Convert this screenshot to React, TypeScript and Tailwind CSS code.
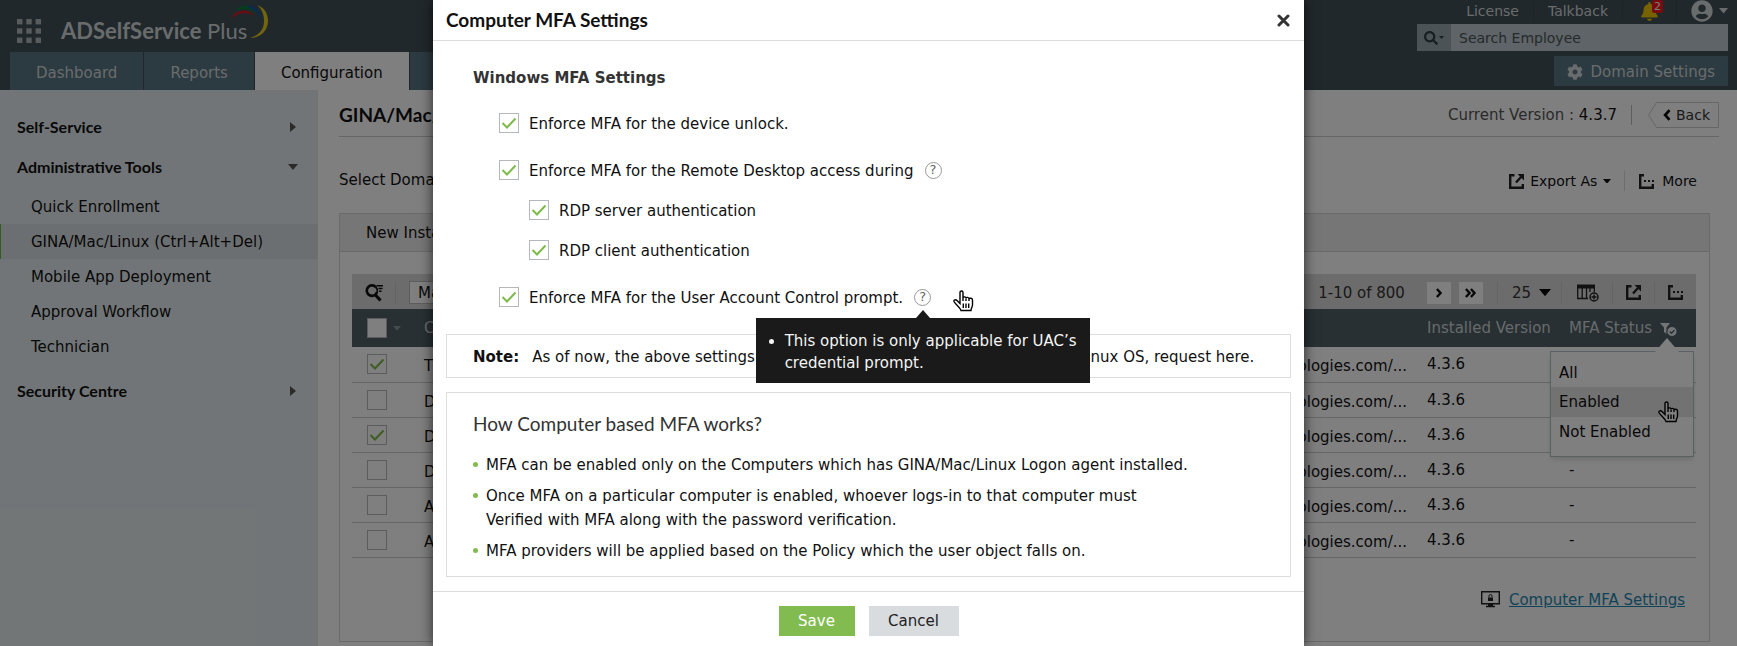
import type { ReactNode } from 'react'
import { FaCog, FaSearch, FaUserCircle } from 'react-icons/fa'
import { FaBell } from 'react-icons/fa6'
import { clsx } from 'clsx'

interface NavItem {
  label: string
  active?: boolean
}

interface ComputerRow {
  name: string
  selected: boolean
  domain: string
  version: string
  status?: string
}

const TABS: NavItem[] = [
  { label: 'Dashboard' },
  { label: 'Reports' },
  { label: 'Configuration', active: true },
  { label: 'Admin' },
]

const ADMIN_TOOLS: NavItem[] = [
  { label: 'Quick Enrollment' },
  { label: 'GINA/Mac/Linux (Ctrl+Alt+Del)', active: true },
  { label: 'Mobile App Deployment' },
  { label: 'Approval Workflow' },
  { label: 'Technician' },
]

const DOMAIN = 'technologies.com/...'

const ROWS: ComputerRow[] = [
  { name: 'TEST-1', selected: true, domain: DOMAIN, version: '4.3.6' },
  { name: 'DESKTOP-1', selected: false, domain: DOMAIN, version: '4.3.6' },
  { name: 'DESKTOP-2', selected: true, domain: DOMAIN, version: '4.3.6' },
  { name: 'DESKTOP-3', selected: false, domain: DOMAIN, version: '4.3.6', status: '-' },
  { name: 'ADMIN-1', selected: false, domain: DOMAIN, version: '4.3.6', status: '-' },
  { name: 'ADMIN-2', selected: false, domain: DOMAIN, version: '4.3.6', status: '-' },
]

export default function App() {
  return (
    <div className="relative min-h-screen overflow-hidden bg-white font-['DejaVu_Sans',Verdana,sans-serif] text-[15px] leading-5 text-[#111]">
      <TopBar />
      <div className="flex min-h-[556px]">
        <Sidebar />
        <MainContent />
      </div>
      <div className="absolute inset-0 flex justify-center bg-black/50">
        <MfaDialog />
      </div>
    </div>
  )
}

// =============================================================================
// Header
// =============================================================================

function TopBar() {
  return (
    <header className="flex h-[90px] justify-between bg-[#425056] text-[#d3d8da]">
      <div className="flex flex-col justify-between">
        <div className="flex h-[52px] items-end gap-5 pl-[17px]">
          <button type="button" aria-label="Apps" className="mb-[9px]">
            <AppsIcon />
          </button>
          <div className="relative pb-2 font-[Lato,sans-serif] text-[22px] leading-[26px]">
            <strong>ADSelfService</strong> Plus
            <Swoosh />
          </div>
        </div>
        <nav className="flex h-[38px] gap-px pl-[10px]">
          {TABS.map((tab) => (
            <a
              key={tab.label}
              href="#"
              className={clsx(
                'flex items-center px-[26px] pt-1',
                tab.active ? 'bg-white text-[#111]' : 'bg-[#587582]'
              )}
            >
              {tab.label}
            </a>
          ))}
        </nav>
      </div>

      <div className="flex flex-col items-end pr-[9px]">
        <div className="flex h-6 items-center pb-0.5 text-sm">
          <a href="#" className="border-r border-[#3a474d] px-[14px]">License</a>
          <a href="#" className="border-r border-[#3a474d] px-[14px]">Talkback</a>
          <button type="button" aria-label="Notifications" className="relative mx-[17px]">
            <FaBell className="text-[19px] text-[#f0c400]" />
            <span className="absolute -top-0.5 -right-1 rounded-xs bg-[#f01818] px-[2px] text-[11px] leading-[13px] text-white">
              2
            </span>
          </button>
          <button type="button" aria-label="Account" className="flex items-center gap-[6px] border-l border-[#3a474d] pl-[14px]">
            <FaUserCircle className="text-[22px]" />
            <Caret className="w-[9px]" />
          </button>
        </div>
        <div className="flex h-[27px] w-[311px] bg-[#bcc8ce]">
          <button type="button" aria-label="Search type" className="flex w-[34px] items-center justify-center gap-px bg-[#98a6ad] text-[#333d42]">
            <FaSearch className="text-sm" />
            <Caret className="w-[5px]" />
          </button>
          <input
            aria-label="Search Employee"
            placeholder="Search Employee"
            className="min-w-0 grow bg-transparent px-2 text-sm placeholder:text-[#4d5558]"
          />
        </div>
        <button type="button" className="mt-[5px] flex h-[30px] items-center gap-2 bg-[#587582] px-[13px] pt-0.5">
          <FaCog className="text-base" />
          Domain Settings
        </button>
      </div>
    </header>
  )
}

// =============================================================================
// Sidebar
// =============================================================================

function Sidebar() {
  return (
    <aside className="w-[318px] shrink-0 bg-[#e3ebee] pt-[27px]">
      <SidebarHeading label="Self-Service" />
      <div className="mt-5">
        <SidebarHeading label="Administrative Tools" open />
      </div>
      <ul className="mt-3">
        {ADMIN_TOOLS.map((item) => (
          <li key={item.label}>
            <a
              href="#"
              className={clsx(
                'flex h-[35px] items-center border-l pl-[30px]',
                item.active ? 'border-[#6dbb3d] bg-[#d9dfe2]' : 'border-transparent'
              )}
            >
              {item.label}
            </a>
          </li>
        ))}
      </ul>
      <div className="mt-[17px]">
        <SidebarHeading label="Security Centre" />
      </div>
    </aside>
  )
}

function SidebarHeading({ label, open = false }: { label: string; open?: boolean }) {
  return (
    <button
      type="button"
      className="flex h-5 w-full items-center justify-between pr-5 pl-[17px] font-[Lato,sans-serif] text-base font-bold"
    >
      {label}
      <Caret className={clsx('w-[10px] text-[#555]', !open && '-rotate-90')} />
    </button>
  )
}

// =============================================================================
// Main content
// =============================================================================

function MainContent() {
  return (
    <main className="min-w-0 grow pr-[18px] pl-[21px]">
      <div className="flex h-[47px] items-center justify-between border-b border-[#ccc] pt-[3px]">
        <h1 className="font-[Lato,sans-serif] text-[19px] font-bold">GINA/Mac/Linux (Ctrl+Alt+Del)</h1>
        <div className="flex items-center">
          <span className="text-[#555]">
            Current Version : <span className="text-[#111]">4.3.7</span>
          </span>
          <span className="mr-4 ml-[14px] h-5 w-px bg-[#bbb]" />
          <BackButton />
        </div>
      </div>

      <div className="mt-8 flex items-center justify-between pr-[22px]">
        <label className="flex items-center gap-2">
          Select Domain
          <select className="w-48 border border-[#ccc] bg-white text-sm">
            <option>All Domains</option>
          </select>
        </label>
        <div className="flex items-center pt-0.5 text-sm">
          <button type="button" className="flex items-center gap-[6px] border-r border-[#ddd] pr-[13px]">
            <ExportIcon />
            Export As
            <Caret className="w-2" />
          </button>
          <button type="button" className="flex items-center gap-2 pl-[14px]">
            <MoreIcon />
            More
          </button>
        </div>
      </div>

      <section className="mt-[22px] mr-[9px] h-[429px] border border-[#d4d4d4]">
        <div className="flex h-[38px] items-center border-b border-[#d4d4d4] bg-[#ececec] px-[26px]">
          New Installation
        </div>
        <div className="mt-[22px] mr-[13px] ml-3">
          <TableToolbar />
          <ComputerTable />
          <a href="#" className="mt-8 mr-[11px] flex items-center justify-end gap-[9px] text-[#1f87b0]">
            <MonitorLockIcon />
            <span className="underline">Computer MFA Settings</span>
          </a>
        </div>
      </section>
    </main>
  )
}

function BackButton() {
  return (
    <button type="button" className="relative flex h-[26px] w-[71px] items-center justify-end gap-[5px] pr-[9px] text-sm">
      <svg viewBox="0 0 71 26" className="absolute inset-0 h-full w-full" fill="none" stroke="#ccc">
        <path d="M8.5.5h62v25h-62L.5 13z" />
      </svg>
      <Chevron className="h-3 rotate-180" />
      <span className="text-[#333]">Back</span>
    </button>
  )
}

function TableToolbar() {
  return (
    <div className="flex h-[35px] items-center justify-between bg-[#d9d9d9] px-[13px] pt-0.5">
      <div className="flex items-center">
        <button type="button" aria-label="Filter rows">
          <SearchListIcon />
        </button>
        <Divider className="mr-[13px] ml-3" />
        <select aria-label="Move to" className="h-[23px] w-40 border border-[#bbb] bg-white px-1">
          <option>Manage</option>
        </select>
      </div>
      <div className="flex items-center">
        <span className="text-[#333]">1-10 of 800</span>
        <button type="button" aria-label="Next page" className="ml-[22px] flex h-[22px] w-6 items-center justify-center bg-white">
          <Chevron className="h-[10px]" />
        </button>
        <button type="button" aria-label="Last page" className="ml-2 flex h-[22px] w-6 items-center justify-center bg-white">
          <Chevron className="h-[10px]" />
          <Chevron className="-ml-px h-[10px]" />
        </button>
        <Divider className="mx-[14px]" />
        <button type="button" className="flex items-center gap-2 text-[#333]">
          25
          <Caret className="w-3 text-black" />
        </button>
        <Divider className="mr-[15px] ml-[10px]" />
        <button type="button" aria-label="Add column">
          <ColumnsPlusIcon />
        </button>
        <Divider className="mx-[13px]" />
        <button type="button" aria-label="Export">
          <ExportIcon />
        </button>
        <Divider className="mx-[13px]" />
        <button type="button" aria-label="More">
          <MoreIcon />
        </button>
      </div>
    </div>
  )
}

function ComputerTable() {
  return (
    <table className="w-full table-fixed text-left">
      <thead className="bg-[#506066] text-[#cfd5d8]">
        <tr className="h-[38px]">
          <th className="w-[72px] pl-[15px] font-normal">
            <span className="flex items-center gap-[6px]">
              <CheckBox label="Select all" />
              <Caret className="w-2 text-[#8b989e]" />
            </span>
          </th>
          <th className="font-normal">Computer Name</th>
          <th className="font-normal">Domain</th>
          <th className="w-[142px] font-normal">Installed Version</th>
          <th className="w-[127px] font-normal">
            <span className="relative flex items-center gap-2">
              MFA Status
              <FilterCheckIcon />
              <StatusMenu />
            </span>
          </th>
        </tr>
      </thead>
      <tbody>
        {ROWS.map((row) => (
          <tr key={row.name} className="h-[35px] border-b border-[#ccc]">
            <td className="pl-[15px]">
              <CheckBox label={`Select ${row.name}`} checked={row.selected} />
            </td>
            <td className="pt-1">{row.name}</td>
            <td className="pt-1 pr-5 text-right">{row.domain}</td>
            <td>{row.version}</td>
            <td>{row.status}</td>
          </tr>
        ))}
      </tbody>
    </table>
  )
}

function StatusMenu() {
  return (
    <div className="absolute top-[33px] -left-[19px] h-[106px] w-36 border border-[#b5c2c4] bg-white pt-[7px] text-[#111] shadow-md">
      <svg viewBox="0 0 24 14" className="absolute -top-[14px] right-[14px] w-6" fill="white">
        <path d="M0 14 12 0l12 14z" />
      </svg>
      <button type="button" className="block h-7 w-full px-2 text-left">All</button>
      <button type="button" className="relative block h-[30px] w-full bg-[#e4e4e4] px-2 text-left">
        Enabled
        <HandCursor className="absolute top-[14px] right-[14px]" />
      </button>
      <button type="button" className="block h-[30px] w-full px-2 text-left">Not Enabled</button>
    </div>
  )
}

// =============================================================================
// Dialog
// =============================================================================

function MfaDialog() {
  return (
    <div
      role="dialog"
      aria-labelledby="mfa-title"
      className="w-[871px] max-w-full bg-white shadow-[0_0_12px_rgba(0,0,0,0.7)]"
    >
      <div className="flex h-[41px] items-center justify-between border-b border-[#ddd] pr-[14px] pl-[13px]">
        <h2 id="mfa-title" className="font-[Lato,sans-serif] text-[19px] font-bold">
          Computer MFA Settings
        </h2>
        <button type="button" aria-label="Close">
          <CloseIcon />
        </button>
      </div>

      <div className="px-[13px] pt-[27px] pb-[14px]">
        <h3 className="pl-[27px] text-[15px] font-bold text-[#333]">Windows MFA Settings</h3>
        <div className="mt-[25px] flex flex-col gap-[27px] pl-[53px]">
          <Option label="Enforce MFA for the device unlock." />
          <div className="flex flex-col gap-5">
            <Option label="Enforce MFA for the Remote Desktop access during">
              <HelpIcon />
            </Option>
            <div className="flex flex-col gap-5 pl-[30px]">
              <Option label="RDP server authentication" />
              <Option label="RDP client authentication" />
            </div>
          </div>
          <Option label="Enforce MFA for the User Account Control prompt.">
            <HelpIcon>
              <Tooltip />
            </HelpIcon>
            <HandCursor className="ml-[22px] translate-y-1" />
          </Option>
        </div>

        <p className="mt-[27px] flex h-11 items-center gap-[13px] border border-[#ddd] pt-0.5 pl-[26px] whitespace-nowrap">
          <strong>Note:</strong>
          As of now, the above settings are not applicable for the Mac OS and the Linux OS, request here.
        </p>

        <div className="mt-[14px] border border-[#ddd] px-[26px] pt-[19px] pb-[13px]">
          <h3 className="font-[Lato,sans-serif] text-[19px] leading-6 text-[#333]">How Computer based MFA works?</h3>
          <ul className="mt-[17px] flex flex-col gap-[7px] leading-6">
            <Bullet>MFA can be enabled only on the Computers which has GINA/Mac/Linux Logon agent installed.</Bullet>
            <Bullet>
              Once MFA on a particular computer is enabled, whoever logs-in to that computer must
              <br />
              Verified with MFA along with the password verification.
            </Bullet>
            <Bullet>MFA providers will be applied based on the Policy which the user object falls on.</Bullet>
          </ul>
        </div>
      </div>

      <div className="flex justify-center gap-[14px] border-t border-[#ddd] pt-[14px] pb-3">
        <button type="button" className="h-[30px] w-[76px] bg-[#82bc50] text-white">Save</button>
        <button type="button" className="h-[30px] w-[90px] bg-[#d8dcde] text-[#222]">Cancel</button>
      </div>
    </div>
  )
}

function Option({ label, children }: { label: string; children?: ReactNode }) {
  return (
    <div className="flex h-5 items-center">
      <label className="flex items-center gap-[10px]">
        <CheckBox checked />
        <span className="pt-0.5">{label}</span>
      </label>
      {children}
    </div>
  )
}

function Bullet({ children }: { children: ReactNode }) {
  return (
    <li className="flex gap-2">
      <span className="mt-[9px] h-[5px] w-[5px] shrink-0 rounded-full bg-[#82bc50]" />
      <span>{children}</span>
    </li>
  )
}

function Tooltip() {
  return (
    <div role="tooltip" className="absolute top-7 left-1/2 z-10 w-[334px] -translate-x-1/2 bg-[#1a1a1a] pt-3 pb-[9px] pl-[29px] text-[15px] leading-[22px] text-[#f4f4f4]">
      <svg viewBox="0 0 14 8" className="absolute -top-2 left-1/2 w-[14px] -translate-x-1/2" fill="#1a1a1a">
        <path d="M0 8 7 0l7 8z" />
      </svg>
      <ul className="list-disc">
        <li className="whitespace-nowrap">
          This option is only applicable for UAC’s
          <br />
          credential prompt.
        </li>
      </ul>
    </div>
  )
}

interface CheckBoxProps {
  checked?: boolean
  label?: string
}

function CheckBox({ checked = false, label }: CheckBoxProps) {
  return (
    <span className="relative block h-5 w-5 shrink-0">
      <input
        type="checkbox"
        aria-label={label}
        defaultChecked={checked}
        className="peer block h-5 w-5 appearance-none border border-[#b4b8ba] bg-white"
      />
      <svg
        viewBox="0 0 20 20"
        className="pointer-events-none absolute inset-0 hidden peer-checked:block"
        fill="none"
        stroke="#7dba4b"
        strokeWidth="2"
      >
        <path d="M3.5 10 8 14.500 16.500 5.500" />
      </svg>
    </span>
  )
}

// =============================================================================
// Icons
// =============================================================================

function Divider({ className }: { className?: string }) {
  return <span className={clsx('h-[22px] w-px bg-[#c9c9c9]', className)} />
}

function Caret({ className }: { className?: string }) {
  return (
    <svg viewBox="0 0 10 6" className={className} fill="currentColor">
      <path d="M0 0h10L5 6z" />
    </svg>
  )
}

function Chevron({ className }: { className?: string }) {
  return (
    <svg viewBox="0 0 7 11" className={className} fill="none" stroke="#111" strokeWidth="2.600">
      <path d="m1 1 4 4.500L1 10" />
    </svg>
  )
}

function CloseIcon() {
  return (
    <svg width="13" height="13" viewBox="0 0 13 13" fill="none" stroke="#333" strokeWidth="3" strokeLinecap="round">
      <path d="m2 2 9 9M11 2l-9 9" />
    </svg>
  )
}

function HelpIcon({ children }: { children?: ReactNode }) {
  return (
    <span className="relative ml-[11px] flex h-[17px] w-[17px] items-center justify-center rounded-full border border-[#999] text-[13px] text-[#666]">
      ?
      {children}
    </span>
  )
}

function AppsIcon() {
  return (
    <svg width="24" height="24" viewBox="0 0 24 24" fill="#b3b8ba">
      {[0, 9.3, 18.6].map((y) =>
        [0, 9.3, 18.6].map((x) => <rect key={`${x}-${y}`} x={x} y={y} width="5.400" height="5.400" />)
      )}
    </svg>
  )
}

function Swoosh() {
  return (
    <svg viewBox="0 0 40 35" className="absolute -top-[14px] -right-[22px] w-10">
      <path d="M8 5c4-4 12-5 18-1l2 6C21 5 14 4 8 7z" fill="#0d7a3c" />
      <path d="M19 1c8 0 13 7 14 15-3-6-8-10-14-12z" fill="#1c5494" />
      <path d="M2 16C4 7 17 2 26 12 18 8 8 8 2 16z" fill="#cc1f26" />
      <path d="M28 1c8 3 11 9 11 16 0 10-8 17-18 17 9-3 14-8 14-17 0-7-2-12-7-16z" fill="#e6cb1c" />
    </svg>
  )
}

function ExportIcon() {
  return (
    <svg width="15" height="15" viewBox="0 0 15 15" fill="none" stroke="#222" strokeWidth="2.400">
      <path d="M5.500 1.200H1.200v12.600h12.600V10" />
      <path d="M7 8.500 12 3" />
      <path d="M8.500 0H15v6.500z" fill="#222" stroke="none" />
    </svg>
  )
}

function MoreIcon() {
  return (
    <svg width="15" height="15" viewBox="0 0 15 15" fill="none" stroke="#222" strokeWidth="2.400">
      <path d="M5 1.200H1.200v12.600h12.600V10" />
      <path d="M5 7h10" strokeWidth="2" strokeDasharray="2 2" />
    </svg>
  )
}

function SearchListIcon() {
  return (
    <svg width="18" height="18" viewBox="0 0 18 18" fill="none" stroke="#111">
      <path d="M11 3.300A5.200 5.200 0 1 0 12 8" strokeWidth="2.600" />
      <path d="M11 3.300A5.200 5.200 0 0 1 10.500 10.500" strokeWidth="1.800" />
      <path d="m10.500 11 5 5.500" strokeWidth="3.200" />
      <path d="M11.500 1.700H18M13.500 4.500h4M14 7.200h2.500" strokeWidth="1.400" />
    </svg>
  )
}

function ColumnsPlusIcon() {
  return (
    <svg width="22" height="18" viewBox="0 0 22 18" fill="none" stroke="#222">
      <path d="M0 2.500h18" strokeWidth="4" />
      <path d="M.7 3v11.500H11M5.200 4v10M9.500 4v10M13 4v4M17.300 4v4" strokeWidth="1.300" />
      <circle cx="17" cy="13" r="4" strokeWidth="1.500" />
      <path d="M17 10.500v5M14.500 13h5" strokeWidth="1.400" />
    </svg>
  )
}

function FilterCheckIcon() {
  return (
    <svg width="17" height="14" viewBox="0 0 17 14" className="mt-1" fill="#e6eaec">
      <path d="M0 0h10L6.500 4.500V11L4 9V4.500z" />
      <circle cx="12" cy="8.500" r="5" stroke="#506066" />
      <path d="m9.800 8.500 1.700 1.700 3-3.200" fill="none" stroke="#506066" strokeWidth="1.300" />
    </svg>
  )
}

function MonitorLockIcon() {
  return (
    <svg width="19" height="17" viewBox="0 0 19 17" fill="none" stroke="#222">
      <path d="M.7.700h17.600v12H.700z" strokeWidth="1.400" />
      <path d="M7 13h5v2.200H7z" fill="#222" stroke="none" />
      <path d="M5 15.500h9" strokeWidth="1.500" />
      <path d="M7 6.500h5V10H7z" fill="#222" stroke="none" />
      <path d="M8 6.500V5a1.500 1.500 0 0 1 3 0v1.500" />
    </svg>
  )
}

function HandCursor({ className }: { className?: string }) {
  return (
    <svg width="21" height="22" viewBox="0 0 21 22" className={className} fill="white" stroke="black" strokeWidth="1.400">
      <path d="M7 13.500V2.500C7 .5 10 .5 10 2.500V8c0-1.500 3-1.500 3 .3 0-1.300 3-1.300 3 .7 0-1.300 3.500-1 3.500 1V15c0 2-1.500 3-1.500 5.500H8C7.500 17.500 3 15 1 11.500c-.5-1.500 1.500-2.500 3-1l3 3z" />
      <path d="M10 8v3M13 8.500V11M16 9v2M10.300 13.500v4.500M13 13.500v4.500M15.700 13.500v4.500" />
    </svg>
  )
}
